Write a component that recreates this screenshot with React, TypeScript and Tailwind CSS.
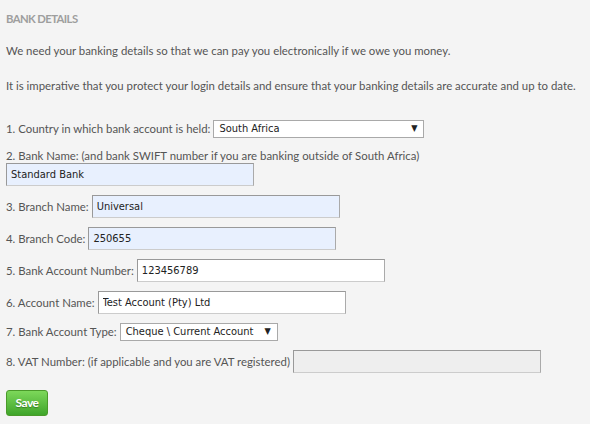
import React from 'react';

const label = 'text-[11.4px] text-[#555] mr-[3px] whitespace-nowrap';
const field =
  'h-[23px] w-[248px] border border-t-[#999] border-l-[#999] border-r-[#aaa] border-b-[#ccc] px-[4px] text-[11px] text-[#222] outline-none';
const inputFont = { fontFamily: '"DejaVu Sans Condensed", "DejaVu Sans", sans-serif' };

function Select({ value, width }: { value: string; width: string }) {
  return (
    <div
      className={`flex items-center justify-between h-[18px] ${width} bg-white border border-[#a9a9a9] pl-[5px] pr-[6px] text-[11px] text-[#222] whitespace-nowrap`}
      style={inputFont}
    >
      <span>{value}</span>
      <span className="text-[9px] text-[#222]">▼</span>
    </div>
  );
}

function Field({ value, blue, disabled }: { value?: string; blue?: boolean; disabled?: boolean }) {
  const bg = disabled ? 'bg-[#eeeeee]' : blue ? 'bg-[#e8f0fe]' : 'bg-white';
  return <input readOnly value={value ?? ''} className={`${field} ${bg}`} style={inputFont} />;
}

export default function App() {
  return (
    <div
      className="w-[590px] h-[424px] bg-[#f4f4f4] px-[6px] pt-[11px] overflow-hidden"
      style={{ fontFamily: 'Lato, "Open Sans", sans-serif' }}
    >
      <h2 className="text-[11.3px] leading-[15px] font-bold text-[#9e9e9e] tracking-[-0.6px]">BANK DETAILS</h2>

      <p className="mt-[17px] text-[11.4px] leading-[16px] text-[#555]">
        We need your banking details so that we can pay you electronically if we owe you money.
      </p>
      <p className="mt-[19px] text-[11.4px] leading-[16px] text-[#555] whitespace-nowrap">
        It is imperative that you protect your login details and ensure that your banking details are accurate and up to date.
      </p>

      <div className="mt-[26px] flex items-center h-[18px]">
        <span className={label}>1. Country in which bank account is held:</span>
        <Select value="South Africa" width="w-[211px]" />
      </div>

      <div className="mt-[10px] text-[11.4px] leading-[16px] text-[#555]">
        2. Bank Name: (and bank SWIFT number if you are banking outside of South Africa)
      </div>
      <div className="mt-[-1px] flex">
        <Field value="Standard Bank" blue />
      </div>

      <div className="mt-[9px] flex items-center">
        <span className={label}>3. Branch Name:</span>
        <Field value="Universal" blue />
      </div>

      <div className="mt-[9px] flex items-center">
        <span className={label}>4. Branch Code:</span>
        <Field value="250655" blue />
      </div>

      <div className="mt-[9px] flex items-center">
        <span className={label}>5. Bank Account Number:</span>
        <Field value="123456789" />
      </div>

      <div className="mt-[9px] flex items-center">
        <span className={label}>6. Account Name:</span>
        <Field value="Test Account (Pty) Ltd" />
      </div>

      <div className="mt-[9px] flex items-center h-[18px]">
        <span className={label}>7. Bank Account Type:</span>
        <Select value="Cheque \ Current Account" width="w-[158px]" />
      </div>

      <div className="mt-[9px] flex items-center">
        <span className={label}>8. VAT Number: (if applicable and you are VAT registered)</span>
        <Field disabled />
      </div>

      <button className="mt-[17px] h-[26px] w-[42px] rounded-[3px] border border-[#4a9a2a] bg-gradient-to-b from-[#7cd85a] to-[#3fa52a] text-[12px] font-bold text-white tracking-[-0.5px] [text-shadow:0_1px_1px_rgba(0,0,0,0.3)]">
        Save
      </button>
    </div>
  );
}
